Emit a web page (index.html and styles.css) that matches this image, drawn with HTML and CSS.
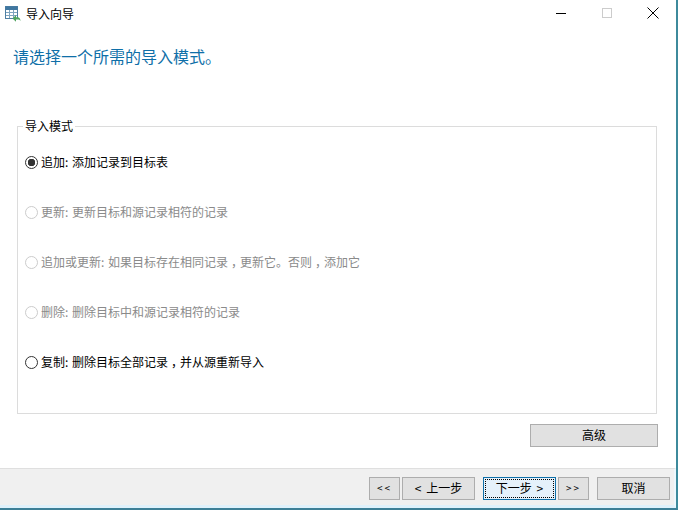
FILE: index.html
```html
<!DOCTYPE html>
<html lang="zh-CN">
  <head>
    <meta charset="UTF-8">
    <title>导入向导</title>
    <link rel="stylesheet" href="styles.css">
  </head>
  <body>

    <div id="window">

      <div id="titlebar">
        <svg class="app-icon" width="16" height="16" viewBox="0 0 16 16">
          <rect x="0.5" y="0.5" width="12" height="12" fill="#fff" stroke="#4f7fa3"/>
          <rect x="0.5" y="0.5" width="12" height="3.5" fill="#3f77a0"/>
          <path d="M4.500 4v8M8.500 4v8M1 6.500h11M1 9.500h11" stroke="#7fa5c0" fill="none"/>
          <path d="M7.500 12.500l3.500-3.500v2.200h1.500c1.800 0 3 1.300 3 3.800-.7-1.100-1.500-1.500-3-1.500h-1.500v2.200z" fill="#4fa35f"/>
        </svg>
        <div id="title">导入向导</div>
        <div class="caption-btn">
          <svg width="10" height="10" viewBox="0 0 10 10"><path d="M0 5.500h10" stroke="#000"/></svg>
        </div>
        <div class="caption-btn">
          <svg width="10" height="10" viewBox="0 0 10 10"><rect x="0.500" y="0.500" width="9" height="9" fill="none" stroke="#ccc"/></svg>
        </div>
        <div class="caption-btn">
          <svg width="12" height="12" viewBox="0 0 12 12"><path d="M0.500 0.500l11 11M11.500 0.500l-11 11" stroke="#000"/></svg>
        </div>
      </div>

      <div id="content">
        <div id="heading">请选择一个所需的导入模式。</div>

        <div id="mode-group">
          <div id="mode-legend">导入模式</div>
          <div class="mode checked"><span class="radio"></span><span class="mode-text">追加: 添加记录到目标表</span></div>
          <div class="mode disabled"><span class="radio"></span><span class="mode-text">更新: 更新目标和源记录相符的记录</span></div>
          <div class="mode disabled"><span class="radio"></span><span class="mode-text">追加或更新: 如果目标存在相同记录<span class="comma">，</span>更新它。否则<span class="comma">，</span>添加它</span></div>
          <div class="mode disabled"><span class="radio"></span><span class="mode-text">删除: 删除目标中和源记录相符的记录</span></div>
          <div class="mode"><span class="radio"></span><span class="mode-text">复制: 删除目标全部记录<span class="comma">，</span>并从源重新导入</span></div>
        </div>

        <div id="advanced-row">
          <div class="btn advanced">高级</div>
        </div>
      </div>

      <div id="footer">
        <div class="btn small">&lt;&lt;</div>
        <div class="btn step">&lt; 上一步</div>
        <div class="btn step default"><span>下一步 &gt;</span></div>
        <div class="btn small">&gt;&gt;</div>
        <div class="btn cancel">取消</div>
      </div>

    </div>

  </body>
</html>
```

FILE: styles.css
```css
html, body {
  margin: 0;
  padding: 0;
  box-sizing: border-box;
}
*, *:before, *:after {
  box-sizing: inherit;
}
body {
  width: 678px;
  height: 510px;
  overflow: hidden;
  font-family: "Noto Sans CJK SC", "Liberation Sans", sans-serif;
  font-size: 12px;
  color: #000;
  background-color: #fff;
}
#window {
  display: flex;
  flex-direction: column;
  width: 100%;
  height: 100%;
  border-right: 2px solid #3d8a9c;
  border-bottom: 2px solid #3d7f96;
}
#titlebar {
  display: flex;
  align-items: center;
  height: 27px;
  padding-left: 5px;
}
.app-icon {
  margin-right: 5px;
}
#title {
  flex: 1;
}
.caption-btn {
  display: flex;
  align-items: center;
  justify-content: center;
  align-self: flex-start;
  width: 46px;
  height: 26px;
}
#content {
  flex: 1;
  display: flex;
  flex-direction: column;
  padding: 0 19px 0 17px;
}
#heading {
  margin-left: -4px;
  height: 70px;
  padding-top: 18px;
  font-size: 16px;
  line-height: 22px;
  color: #0f6fa8;
}
#mode-group {
  position: relative;
  height: 288px;
  margin-top: 29px;
  padding-top: 10px;
  padding-left: 7px;
  border: 1px solid #dcdcdc;
}
#mode-legend {
  position: absolute;
  top: -9px;
  left: 5px;
  padding: 0 2px;
  line-height: 16px;
  background-color: #fff;
}
.mode {
  display: flex;
  align-items: center;
  height: 50px;
  white-space: pre;
  word-spacing: 1px;
}
.mode-text {
  padding-bottom: 2px;
}
.comma {
  margin-left: 3px;
  letter-spacing: -3px;
}
.radio {
  width: 13px;
  height: 13px;
  margin-right: 3px;
  border: 1px solid #333;
  border-radius: 50%;
  background-color: #fff;
}
.mode.checked .radio {
  background: radial-gradient(circle, #333 0, #333 3.500px, #fff 4px);
}
.mode.disabled {
  color: #8a8a8a;
}
.mode.disabled .radio {
  border-color: #ccc;
}
#advanced-row {
  display: flex;
  justify-content: flex-end;
  margin-top: 10px;
  margin-right: -1px;
}
.btn {
  display: flex;
  align-items: center;
  justify-content: center;
  height: 23px;
  padding-bottom: 2px;
  border: 1px solid #adadad;
  background-color: #e1e1e1;
}
.btn.advanced {
  width: 128px;
}
#footer {
  display: flex;
  align-items: flex-start;
  justify-content: flex-end;
  height: 40px;
  padding-top: 8px;
  padding-right: 4px;
  background-color: #f0f0f0;
  border-top: 1px solid #dfdfdf;
  border-bottom: 3px solid #dff1fb;
  border-right: 2px solid #eef7fc;
}
.btn.small {
  width: 31px;
  font-size: 10px;
  letter-spacing: 2px;
}
.btn.step {
  width: 73px;
  margin-left: 2px;
  word-spacing: 2px;
}
.btn.default {
  margin-left: 8px;
  margin-right: 2px;
  padding: 1px;
  border-color: #0f6fa8;
  background-color: #e5f1fb;
}
.btn.default span {
  display: flex;
  align-items: center;
  justify-content: center;
  width: 100%;
  height: 100%;
  padding-bottom: 2px;
  border: 1px dotted #000;
}
.btn.cancel {
  width: 73px;
  margin-left: 8px;
}
```
